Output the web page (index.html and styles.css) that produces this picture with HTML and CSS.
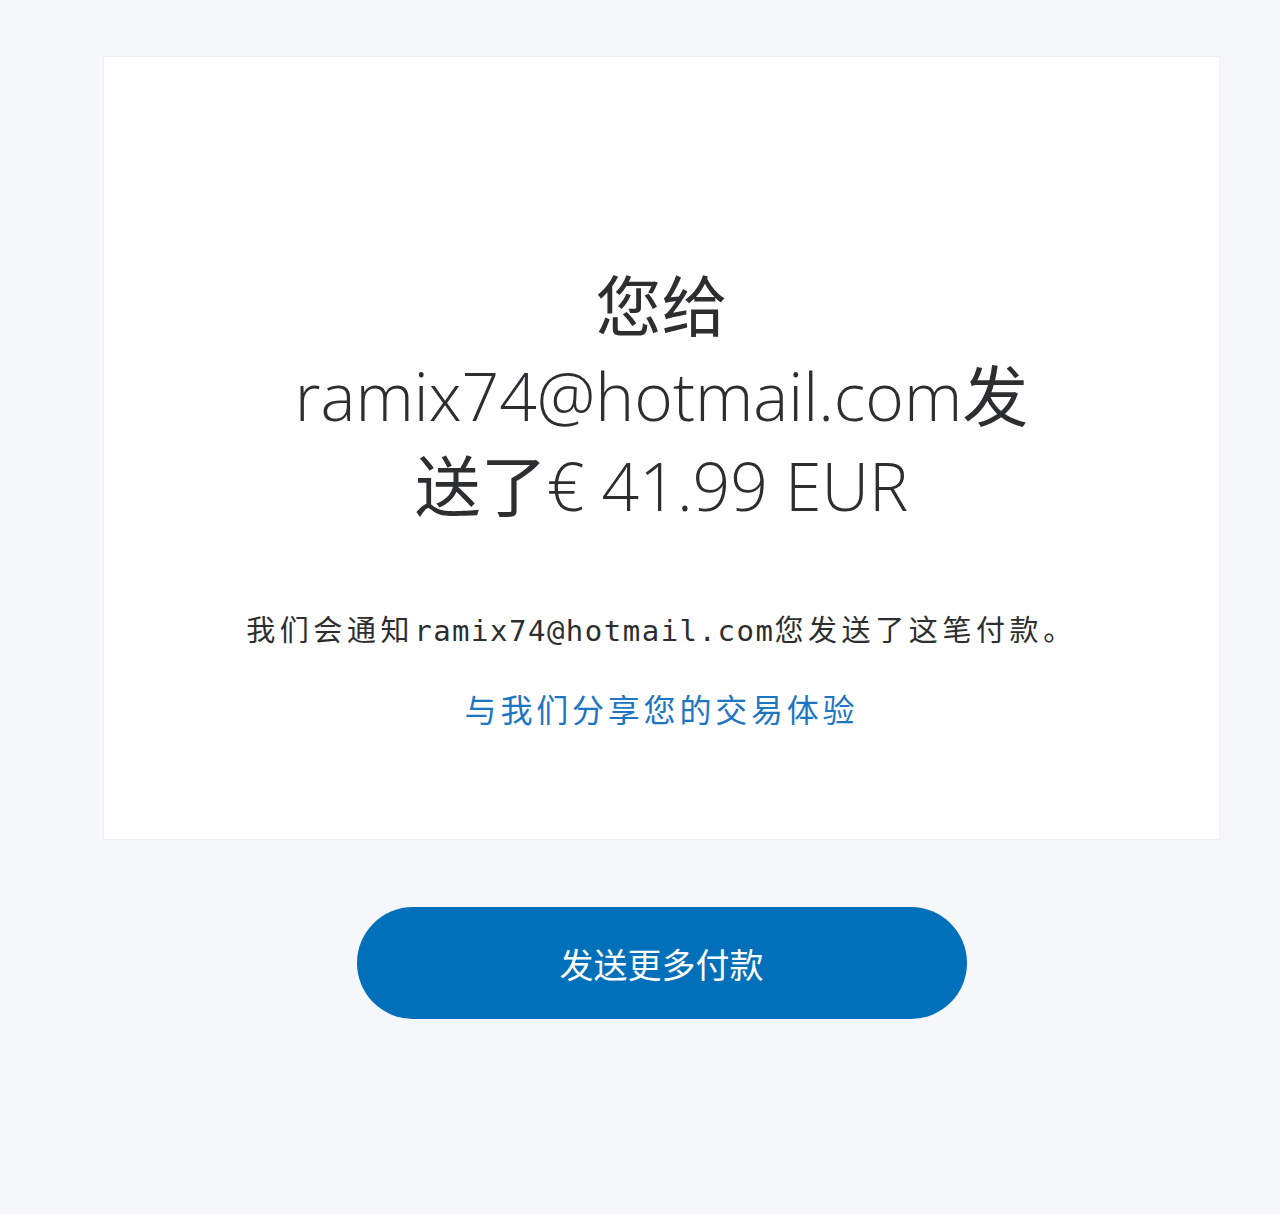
FILE: index.html
```html
<!DOCTYPE html>
<html lang="zh-CN">
<head>
<meta charset="utf-8">
<title>付款已发送</title>
<link rel="stylesheet" href="styles.css">
</head>
<body>
<main class="page">
  <section class="card">
    <h1 class="title"><span class="cjk">您给</span><br>ramix74@hotmail.com<span class="cjk">发</span><br><span class="cjk">送了</span>€ 41.99 EUR</h1>
    <p class="notice">我们会通知<span class="mono">ramix74@hotmail.com</span>您发送了这笔付款。</p>
    <a class="share" href="#">与我们分享您的交易体验</a>
  </section>
  <div class="actions">
    <a class="btn" href="#">发送更多付款</a>
  </div>
</main>
</body>
</html>
```
FILE: styles.css
```css
html, body {
  margin: 0;
  padding: 0;
  background: #f5f7fa;
}
body {
  font-family: "Open Sans", "Noto Sans CJK SC", sans-serif;
  color: #2c2e2f;
}
.page {
  padding: 56px 60px 0 103px;
  display: flex;
  flex-direction: column;
  align-items: stretch;
}
.card {
  background: #ffffff;
  border: 1px solid #eef0f2;
  height: 784px;
  box-sizing: border-box;
  padding-top: 203px;
  display: flex;
  flex-direction: column;
  align-items: center;
  text-align: center;
}
.title {
  margin: 0;
  font-family: "Open Sans", "Noto Sans CJK SC", sans-serif;
  font-weight: 300;
  font-size: 66px;
  line-height: 90px;
  color: #2c2e2f;
}
.cjk {
  font-family: "Noto Sans CJK SC", sans-serif;
  font-weight: 400;
  line-height: 0;
}
.notice {
  margin: 76px 0 0;
  font-family: "Noto Sans CJK SC", sans-serif;
  font-size: 29px;
  letter-spacing: 4.6px;
  line-height: 44px;
  color: #2c2e2f;
}
.mono {
  font-family: "DejaVu Sans Mono", "Noto Sans CJK SC", monospace;
  letter-spacing: 1.5px;
}
.share {
  margin-top: 33px;
  font-family: "Noto Sans CJK SC", sans-serif;
  font-size: 32px;
  letter-spacing: 3.8px;
  line-height: 44px;
  color: #1d76c2;
  text-decoration: none;
}
.actions {
  display: flex;
  justify-content: center;
  padding-top: 67px;
}
.btn {
  display: flex;
  align-items: center;
  justify-content: center;
  width: 610px;
  height: 112px;
  border-radius: 56px;
  background: #0070ba;
  color: #ffffff;
  font-family: "Noto Sans CJK SC", sans-serif;
  font-size: 34px;
  text-decoration: none;
}
```
